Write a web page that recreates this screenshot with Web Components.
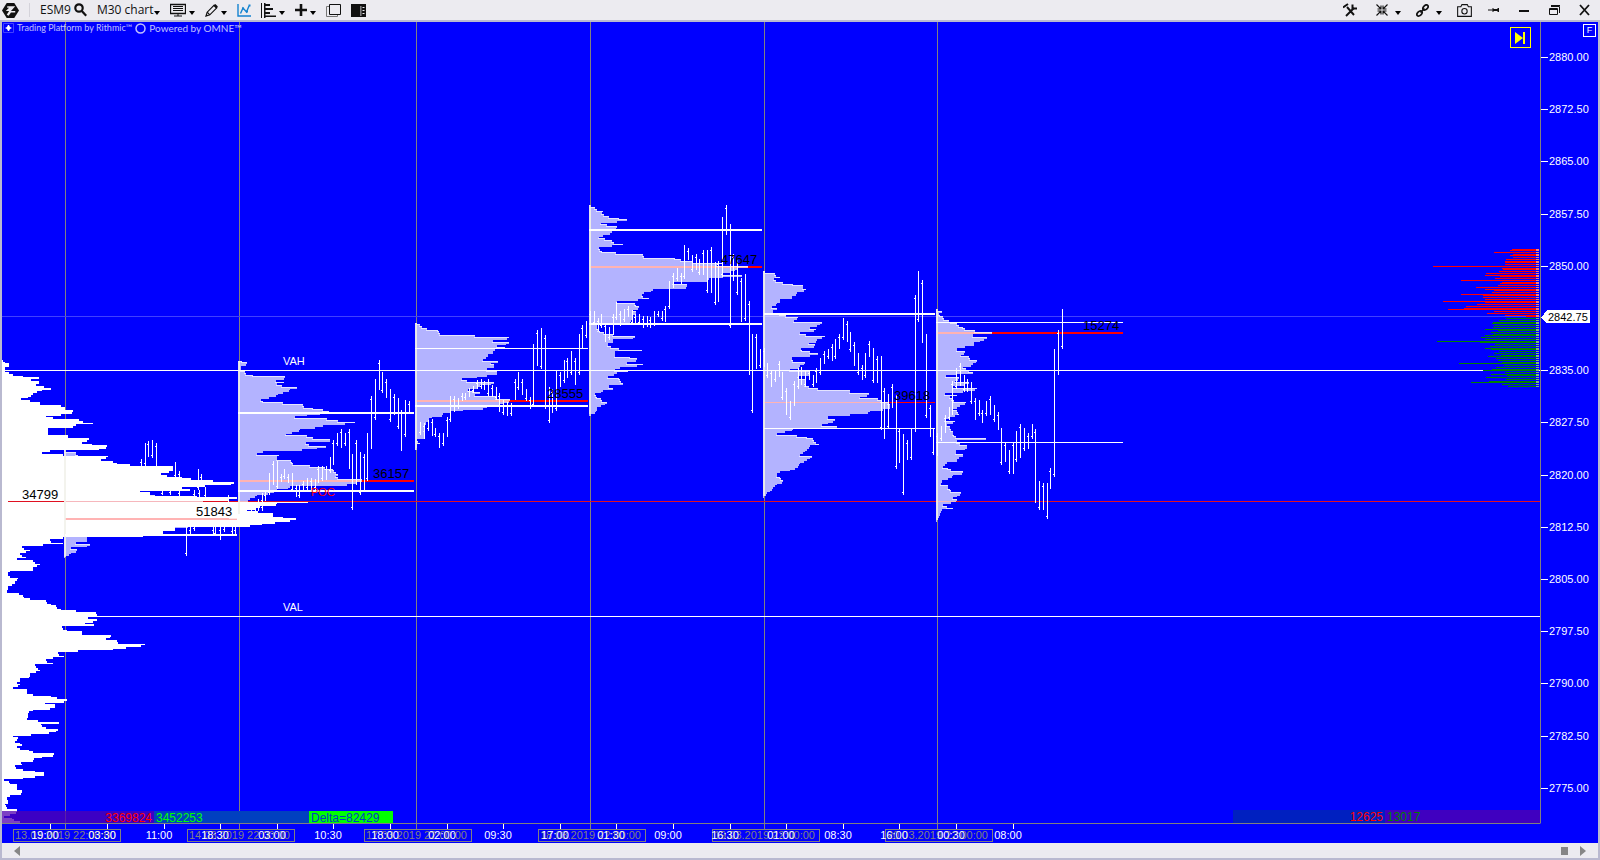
<!DOCTYPE html>
<html lang="en">
<head>
<meta charset="utf-8">
<title>ESM9 M30 chart</title>
<style>
    html, body {
        height: 100%;
        margin: 0;
    }
    body {
        font-family: "Liberation Sans", Arial, sans-serif;
        font-size: 11px;
        background: #ecebf0;
        overflow: hidden;
    }
</style>
</head>
<body>
<chart-window>
    <chart-toolbar slot="toolbar"></chart-toolbar>
    <chart-plot slot="plot"></chart-plot>
    <price-axis slot="prices" last="2842.75"></price-axis>
    <time-axis slot="times"></time-axis>
    <chart-scroller slot="scroller"></chart-scroller>
</chart-window>

<script>
// profile and bar data is stored in thirds of a pixel, relative to an origin
const UNIT = 3;
const TICK = 1.74;
const SESSIONS = [65, 239, 416, 590, 764, 937];

function pairs(text, size = 2) {
    const n = text.trim().split(/[\s,]+/).map(Number);
    const out = [];
    for (let i = 0; i < n.length; i += size) out.push(n.slice(i, i + size));
    return out;
}

class ChartWindow extends HTMLElement {
    constructor() {
        super();
        this.attachShadow({ mode: 'open' });
        this.shadowRoot.innerHTML = `
            <style>
                :host {
                    display: flex;
                    flex-direction: column;
                    height: 100vh;
                }
                .body {
                    flex: 1;
                    min-height: 0;
                    display: grid;
                    grid-template-columns: minmax(0, 1fr) 58px;
                    grid-template-rows: minmax(0, 1fr) 19px 15px;
                    border: 2px solid #b9b9d0;
                    background: #0000ff;
                }
                ::slotted([slot="times"]), ::slotted([slot="scroller"]) { grid-column: 1 / 3; }
            </style>
            <slot name="toolbar"></slot>
            <div class="body">
                <slot name="plot"></slot>
                <slot name="prices"></slot>
                <slot name="times"></slot>
                <slot name="scroller"></slot>
            </div>
        `;
    }
}

class ToolButton extends HTMLElement {
    connectedCallback() {
        if (this.shadowRoot) return;
        this.attachShadow({ mode: 'open' });
        const caret = this.hasAttribute('caret')
            ? '<svg class="caret" width="6" height="4" viewBox="0 0 6 4"><path d="M0 0h6L3 4z"/></svg>' : '';
        this.shadowRoot.innerHTML = `
            <style>
                :host { display: block; }
                button {
                    display: flex;
                    align-items: center;
                    gap: 3px;
                    height: 20px;
                    padding: 0;
                    border: 0;
                    background: none;
                    color: #111;
                    font-family: "Open Sans", "Noto Sans", sans-serif;
                    font-size: 12px;
                    line-height: 20px;
                    white-space: nowrap;
                }
                :host([tight]) button { gap: 0; }
                :host([wide]) button { gap: 7px; }
                .caret { margin-top: 5px; }
                ::slotted(svg) { display: block; }
            </style>
            <button type="button" aria-label="${this.getAttribute('label')}"><slot></slot>${caret}</button>
        `;
    }
}

class ChartToolbar extends HTMLElement {
    constructor() {
        super();
        this.attachShadow({ mode: 'open' });
        this.shadowRoot.innerHTML = `
            <style>
                :host {
                    display: flex;
                    justify-content: space-between;
                    height: 20px;
                    padding: 0 8px 0 2px;
                    background: #ecebf0;
                }
                .group { display: flex; gap: 10px; }
                .group.right { gap: 15px; }
                .sep { width: 1px; margin: 3px 0; background: #d4d3da; }
                svg { fill: none; stroke: #111; stroke-width: 1.4; }
                svg.solid { fill: #111; stroke: none; }
            </style>
            <div class="group">
                <tool-button label="Main menu">
                    <svg width="17" height="17" viewBox="0 0 18 18" class="solid">
                        <path d="M5 1h8l5 8-5 8H5L0 9z"/>
                        <path fill="#ecebf0" d="M5.500 4.500h8.500l-4.500 5H14V11H9.500L7 14.500l-2-1L7.500 9.500H4l3.500-3.500H5.500z"/>
                    </svg>
                </tool-button>
                <div class="sep"></div>
                <tool-button label="ESM9, find instrument">ESM9
                    <svg width="13" height="14" viewBox="0 0 13 14" style="stroke-width:2.200">
                        <circle cx="5" cy="5" r="3.700"/><path d="M7.800 8l4.400 4.800"/>
                    </svg>
                </tool-button>
                <tool-button label="M30 chart" caret tight>M30 chart</tool-button>
                <tool-button label="Screen" caret>
                    <svg width="16" height="14" viewBox="0 0 16 14" style="stroke-width:1">
                        <path d="M.500 1.500h15v9H.500z" stroke-width="1.300"/><path d="M3 3.500h10M3 5.500h10M3 7.500h10M8 10v3M4 13h8"/>
                    </svg>
                </tool-button>
                <tool-button label="Draw" caret>
                    <svg width="13" height="14" viewBox="0 0 13 14" style="stroke-width:1.200">
                        <path d="M1 13l1.200-3.800 7-7 2.600 2.600-7 7z"/><path d="M9.500 2l2.500 2.500" stroke-width="2.500"/><path d="M2.200 9.200l2.600 2.600"/>
                    </svg>
                </tool-button>
                <tool-button label="Indicators">
                    <svg width="14" height="14" viewBox="0 0 14 14" style="stroke:#1583cf">
                        <path d="M1 1v12h13M3.500 10.500L6 5l3.500 4L12 3"/><path d="M5 5.500h2M9 8.500h2M11.500 2.500h2" stroke-width="2"/>
                    </svg>
                </tool-button>
                <tool-button label="Clusters" caret>
                    <svg width="15" height="15" viewBox="0 0 15 15" class="solid">
                        <path d="M0 0h1v15H0zM3 0h1.500v15H3zM4 1h5v2H4zM4 5h8v2H4zM4 9h5v2H4zM4 12.500h11V14H4z"/>
                    </svg>
                </tool-button>
                <tool-button label="Add" caret>
                    <svg width="12" height="12" viewBox="0 0 12 12" class="solid"><path d="M4.700 0h2.600v4.700H12v2.600H7.300V12H4.700V7.300H0V4.700h4.700z"/></svg>
                </tool-button>
                <tool-button label="Windows">
                    <svg width="15" height="13" viewBox="0 0 15 13" style="stroke-width:1">
                        <path d="M3.500.500h11v10h-11z"/><path d="M3 2.500H.500v10h11V11" stroke="#777"/>
                    </svg>
                </tool-button>
                <tool-button label="Side panel">
                    <svg width="15" height="13" viewBox="0 0 15 13" class="solid">
                        <path d="M0 0h15v13H0z"/><path fill="#ecebf0" d="M9.500 2v10h.800V2zM11.500 3h2v1h-2zM11.500 6h2v1h-2zM11.500 9h2v1h-2z"/>
                    </svg>
                </tool-button>
            </div>
            <div class="group right">
                <tool-button label="Settings">
                    <svg width="18" height="14" viewBox="0 0 18 14">
                        <path d="M4 4l7 8M11 5l-8 8" stroke-width="1.900"/><path d="M0 4.500l5-3.500M9.500 1.500v4h4.500" stroke-width="2"/>
                    </svg>
                </tool-button>
                <tool-button label="Scale" caret wide>
                    <svg width="12" height="12" viewBox="0 0 12 12" style="stroke-width:1.100">
                        <path d="M.500.500L5 5M11.500.500L7 5M.500 11.500L5 7M11.500 11.500L7 7M5 1.500V5H1.500M7 1.500V5h3.500M5 10.500V7H1.500M7 10.500V7h3.500"/>
                    </svg>
                </tool-button>
                <tool-button label="Link" caret wide>
                    <svg width="13" height="13" viewBox="0 0 13 13" style="stroke-width:1.700">
                        <ellipse cx="9.500" cy="3.500" rx="3" ry="2" transform="rotate(-45 9.500 3.500)"/>
                        <ellipse cx="3.500" cy="9.500" rx="3" ry="2" transform="rotate(-45 3.500 9.500)"/>
                        <path d="M4.500 8.500l4-4"/>
                    </svg>
                </tool-button>
                <tool-button label="Snapshot">
                    <svg width="15" height="13" viewBox="0 0 14 12" style="stroke-width:1">
                        <path d="M.600 2.500h3l1-2h5l1 2h2.800v9H.600z"/><circle cx="7" cy="6.700" r="2.500"/>
                    </svg>
                </tool-button>
                <tool-button label="Pin">
                    <svg width="15" height="8" viewBox="0 0 15 8" class="solid">
                        <path d="M1 3.500h4.500v1H1zM5.500 2h1v4h-1zM6.500 3h4V2h1.500v4h-1.500V5h-4z"/>
                    </svg>
                </tool-button>
                <tool-button label="Minimize">
                    <svg width="15" height="12" viewBox="0 0 15 12" class="solid"><path d="M2 6h10v2H2z"/></svg>
                </tool-button>
                <tool-button label="Restore">
                    <svg width="15" height="10" viewBox="0 0 15 10" style="stroke-width:1">
                        <path d="M2.500 3.500h8v6h-8zM4 1.500h8.500V8M4 .500h9M2.500 4.500h8"/>
                    </svg>
                </tool-button>
                <tool-button label="Close">
                    <svg width="15" height="12" viewBox="0 0 15 12" style="stroke-width:1.800"><path d="M3 1l9 10M12 1L3 11"/></svg>
                </tool-button>
            </div>
        `;
    }
}

// volume profiles: left edge, top, colour, outline points (x,y)
const CONTRACT = [
    { base: 6, x: 0, y: 350, points: `8,30 15,36 26,42 26,50 15,56 15,64 28,70 40,74 70,80 117,84 117,90 93,92 116,96 116,102 108,105
        132,110 153,116 126,122 110,128 98,132 85,140 78,146 62,150 90,155 120,160 120,166 182,168 196,176 218,184 210,192
        183,197 138,200 160,206 236,210 278,218 228,226 200,234 144,238 144,250 204,258 204,264 266,268 246,276 276,282
        320,290 296,298 280,302 150,305 125,310 190,313 323,320 304,328 340,334 350,342 390,346 520,353 520,360 508,366
        484,372 538,380 545,384 572,390 640,395 702,400 616,406 545,412 570,418 420,424 450,428 450,434 590,442 710,444
        685,450 925,457 830,463 780,470 742,480 820,490 820,496 850,502 888,508 825,516 785,524 750,530 525,536 525,542
        488,546 490,552 710,556 430,560 190,565 150,572 190,580 130,588 65,592 90,600 78,608 60,612 78,620 52,628
        100,634 120,642 98,652 98,660 60,662 30,664 24,672 30,680 54,684 50,690 44,698 36,706 24,712 22,724` },
    { base: 6, x: 0, y: 590, points: `22,4 58,10 68,18 90,28 138,34 154,44 168,50 184,60 228,62 288,68 294,78 264,84 290,90 255,100
        282,106 186,112 200,120 246,126 246,134 333,138 318,148 350,155 435,164 378,172 340,178 276,182 234,186 174,190
        192,198 160,206 138,212 158,222 106,228 120,240 90,250 88,262 60,270 52,278 60,284 38,292 80,300 80,310 154,318
        172,324 200,332 136,340 165,348 150,355 100,360 86,366 82,388 114,394 176,400 124,404 138,412 174,420 148,428
        94,434 40,438 54,446 46,454 60,460 78,470 52,472 86,480 98,488 162,494 126,502 102,510 64,516 66,528 46,530
        68,538 104,544 132,552 104,560 70,564 36,568 12,572 28,578 50,584 52,594 66,600 62,612 30,618 22,622 24,636
        16,644 22,652 50,660 50,666 12,678 36,686 60,695` }
];

const PROFILES = [
    { base: 193, x: 0, y: 350, points: `196,300 228,306 228,314 300,330 350,350 400,370 470,400 500,412 400,424 440,434 580,444 650,462
        690,480 690,500 711,507 600,525 480,540 430,556 262,562 262,572 228,577 296,582 270,586 214,594 230,602 212,608 208,615 194,622` },
    { base: 25, x: 230, y: 310, points: `28,152 36,156 50,160 48,165 34,168 33,182 46,188 70,194 125,202 164,204 163,208 138,212 162,216
        162,221 142,225 155,229 200,234 212,236 180,240 160,246 145,254 138,260 108,262 116,266 92,271 100,275 160,278
        168,284 220,287 250,294 280,301 296,304 270,312 232,318 194,322 290,328 325,334 374,339 345,344 278,349 255,354
        210,360 185,368 168,376 230,380 248,385 335,388 300,392 228,398 236,407 288,408 260,415 215,420 150,424 100,428
        80,433 146,436 140,444 184,450 188,460 240,466 285,474 310,480 324,492 318,500 342,508 396,512 380,520 350,524
        260,528 180,532 140,540 115,552 80,557 60,566 46,575 36,590 50,600 28,610` },
    { base: 556, x: 230, y: 310, points: `560,38 570,44 590,56 625,63 630,74 735,77 836,84 790,92 838,99 800,106 825,112 795,120 790,126
        775,136 760,148 805,154 782,163 792,168 770,176 772,184 802,189 770,196 740,204 695,208 710,215 793,219 750,226
        740,232 715,238 750,247 735,256 800,262 770,268 840,272 820,280 810,286 772,290 740,300 700,304 660,308 640,314
        605,320 598,330 588,340 582,350 586,370 582,385 562,392 570,402 562,408 558,418` },
    { base: 28, x: 580, y: 190, points: `30,46 44,54 68,64 66,70 86,78 116,86 140,92 110,98 62,102 80,107 110,112 96,124 90,132 70,138
        58,142 76,148 95,154 128,163 95,170 58,176 66,183 108,190 188,194 192,202 285,205 340,214 430,222 410,226 505,231
        470,238 430,250 485,258 430,264 388,270 345,276 280,280 320,286 318,296 220,300 192,308 186,316 206,324 175,330
        110,338 165,342 176,352 160,362 168,368 160,380 150,396 60,402 50,410 55,420 72,428 100,436 164,442 100,452
        84,462 92,472 185,480 104,488 106,496 150,502 170,510 140,518 190,524 120,532 105,538 145,542 110,548 84,560
        118,567 130,580 86,588 98,597 68,602 46,612 52,622 62,628 80,638 64,648 50,656 48,666 32,674` },
    { base: 550, x: 580, y: 190, points: `554,244 586,252 600,262 582,268 610,276 638,284 668,290 677,300 650,310 636,322 600,332 590,342
        576,350 590,357 578,364 600,372 655,380 642,392 725,398 710,406 690,412 708,420 660,430 736,438 710,448 708,456
        688,460 705,468 662,478 714,490 690,496 636,502 640,512 674,520 660,530 630,538 690,544 688,556 655,562 675,570
        676,584 714,598 810,604 868,612 840,622 894,628 925,636 930,642 930,652 858,658 910,660 870,666 810,676 744,682
        740,688 764,691 726,704 770,711 640,718 590,730 650,738 680,740 700,748 716,764 690,770 674,782 660,797 695,800
        660,820 655,830 630,840 600,846 590,854 600,860 610,874 590,882 578,894 562,908 552,920` },
    { base: 109, x: 900, y: 260, points: `112,148 126,156 118,162 130,172 146,182 172,190 190,204 225,212 275,220 218,226 260,234 240,242
        186,248 222,252 195,262 170,268 152,274 194,276 184,288 206,292 230,304 218,314 190,322 218,336 170,346 138,351
        176,356 165,365 206,370 160,378 230,387 190,394 134,400 170,406 150,410 162,420 198,429 180,436 158,446 172,452
        176,462 150,472 135,480 164,486 142,494 150,502 160,518 168,532 258,538 170,544 180,552 200,560 196,568 168,576
        190,585 176,594 172,602 140,610 128,618 145,626 188,638 160,646 145,656 125,664 122,674 145,680 150,690 182,700
        160,712 170,722 130,734 158,744 125,750 112,780` }
];

// price bars: x, high, low
const BARS = [
    { x: 0, y: 350, bars: `424,328,350 436,280,350 445,274,322 457,270,325 469,280,350 526,336,385 538,363,400 595,357,420 604,372,412
        583,420,440 598,420,440 616,410,442 486,420,436 511,420,436 538,420,440 559,530,618 571,530,558 583,530,542
        640,530,552 646,530,558 661,530,570 673,530,545 685,435,455 697,530,552 706,530,550 754,462,485 766,455,485
        775,452,480 787,440,482` },
    { x: 230, y: 310, bars: `85,568,605 97,550,600 106,545,572 118,490,555 130,453,526 142,453,536 154,492,516 163,476,506 175,492,520
        187,490,548 199,525,562 208,525,563 220,514,544 232,504,540 244,505,545 256,506,540 265,468,520 277,468,512
        289,468,510 301,442,490 310,390,465 322,370,408 334,357,415 346,370,410 358,357,476 367,432,600 379,390,525
        391,425,555 403,432,540 412,369,512 424,258,417 436,207,330 448,150,240 457,186,250 469,207,265 481,237,335
        493,252,315 505,264,356 514,300,423 526,270,380 538,273,312 572,335,375 583,338,385 595,330,364 607,327,378
        616,354,380 628,370,414 640,370,408 652,320,380 661,258,336 673,258,305 685,265,298 697,249,272 706,249,270
        718,235,262 730,228,250 742,210,236 754,207,236 763,213,240 775,207,258 787,225,260 799,230,270 808,250,308
        820,270,315 832,275,317 844,280,318 856,207,270 865,186,240 877,207,255 889,237,272 901,260,297 910,102,292
        922,60,168 934,54,178 946,75,298 958,230,338 967,236,308 979,183,304 991,186,230 1003,150,220 1012,144,205
        1024,123,195 1036,145,225 1048,72,195` },
    { x: 580, y: 190, bars: `7,405,475 19,393,445 31,362,400 43,363,405 55,385,424 64,372,415 76,400,456 88,410,450 100,372,435 109,336,390
        121,363,408 133,357,395 145,348,382 157,360,405 166,372,400 178,372,405 190,378,414 202,378,410 211,380,414
        223,362,408 235,363,382 247,363,393 256,348,396 268,273,358 280,249,294 292,234,274 304,248,282 313,165,267
        325,174,210 337,196,246 349,192,240 358,207,255 370,180,255 382,180,309 394,171,309 406,216,345 415,213,337
        427,81,262 439,45,135 451,102,414 460,192,273 472,207,316 484,263,396 496,252,394 508,333,555 517,432,669
        529,432,537 541,477,534 553,474,532 562,520,564 574,540,590 586,540,576 598,513,560 607,546,630 619,594,675
        631,633,690 643,573,648 655,534,598 664,532,586 676,540,590 688,540,570 700,555,590 709,534,580 721,504,555
        733,483,522 745,477,508 757,462,514 766,447,508 778,432,478 790,384,450 802,393,456 811,426,486 823,456,528
        835,489,555 847,525,570 856,489,564 868,453,502 880,474,579 892,498,579 904,498,720 913,594,747 925,612,716
        937,582,655 949,615,837 958,715,819 970,732,915 982,750,810 994,717,810 1006,315,726 1015,243,396 1027,270,459
        1039,432,684 1051,645,742 1060,715,795` },
    { x: 900, y: 260, bars: `112,520,588 124,497,543 136,465,520 148,441,480 157,363,466 169,324,388 181,309,378 193,345,396 202,357,396
        214,366,432 226,414,480 238,420,468 247,450,489 259,423,468 271,408,465 283,435,486 295,456,510 304,505,615
        316,547,608 328,570,642 340,547,642 349,513,606 361,492,594 373,504,573 385,518,567 397,492,538 406,507,729
        418,663,750 430,669,750 442,669,777 451,624,687 463,267,650 475,210,345 487,147,267` }
];

// session levels: x1, x2, y, thickness
const VALUE_LINES = pairs(`65,237,534,2 238,414,412,2 238,414,490,2 415,588,348,1 415,588,405,2 589,762,229,2 589,762,323,2
    764,935,313,2 764,935,428,1 936,1123,322,1 936,1123,442,1`, 4);
const POC_LINES = pairs('65,237,518,2 238,414,480,2 415,588,400,2 590,762,266,2 764,935,402,1 937,1123,332,2', 4);

// order book: y, left edge
const ASKS = `57,336 61,330 67,282 73,338 76,330 82,340 88,318 94,315 97,315 103,315 109,99 115,305 118,310 124,297 130,258 136,255
    139,300 145,285 151,183 157,305 160,300 166,294 172,228 178,255 181,282 187,276 193,183 196,250 202,250 208,255 214,129
    217,255 223,231 229,198 235,192 238,144 244,282 250,261 256,315 259,378`;
const BIDS = `265,318 271,297 277,280 280,276 286,282 292,279 298,255 301,294 307,274 313,279 316,255 322,243 328,255 334,111 337,240
    343,285 349,270 355,255 358,274 364,297 370,282 376,303 379,264 385,288 391,294 397,306 400,177 406,312 412,288 418,276
    421,249 427,315 433,273 436,322 442,258 448,318 454,267 457,213 463,306 469,324`;

// one bar per price tick; edge holds the bright top of each bar that juts out
function profilePaths(profile) {
    const pts = pairs(profile.points).map(([x, y]) => [profile.x + x / UNIT, profile.y + y / UNIT]);
    const base = Math.round(profile.x + profile.base / UNIT);
    const end = pts[pts.length - 1][1];
    let fill = '', edge = '', prev = base;
    for (let y = pts[0][1]; y < end; y += TICK) {
        const top = Math.round(y), bottom = Math.round(y + TICK);
        const inside = pts.filter(p => p[1] >= y && p[1] < y + TICK);
        let x;
        if (inside.length) {
            x = inside[inside.length - 1][0];
        } else {
            const i = pts.findIndex(p => p[1] > y);
            const a = pts[i - 1], b = pts[i];
            x = a[0] + (b[0] - a[0]) * (y - a[1]) / (b[1] - a[1]);
        }
        x = Math.round(x);
        fill += `M${base} ${top}H${x}V${bottom}H${base}z`;
        if (x > prev) edge += `M${Math.max(base, prev - 1)} ${top}H${x}v1H${Math.max(base, prev - 1)}z`;
        prev = x;
    }
    return { fill, edge, base, top: Math.round(pts[0][1]), height: Math.round(end - pts[0][1]) };
}

class ChartPlot extends HTMLElement {
    constructor() {
        super();
        this.attachShadow({ mode: 'open' });
        this.shadowRoot.innerHTML = `
            <style>
                :host {
                    display: block;
                    position: relative;
                    overflow: hidden;
                    min-width: 0;
                    border-bottom: 1px solid #808080;
                }
                svg { display: block; shape-rendering: crispEdges; }
                .plot, .book { position: absolute; top: 0; height: 100%; }
                .plot { left: 0; width: 100%; }
                .book { right: 0; width: 140px; }
                .volume { font-size: 13px; }
                .brand {
                    position: absolute;
                    top: 0;
                    left: 1px;
                    display: flex;
                    align-items: center;
                    gap: 3px;
                    height: 12px;
                    color: #c0c0ff;
                    font-family: Lato, sans-serif;
                    font-size: 10px;
                    line-height: 12px;
                    white-space: nowrap;
                }
                .brand .platform { font-size: 9px; }
                .brand svg, .end svg { shape-rendering: auto; }
                .end {
                    position: absolute;
                    top: 5px;
                    right: 9px;
                    display: grid;
                    place-items: center;
                    width: 21px;
                    height: 21px;
                    padding: 0;
                    border: 1px solid #ffff00;
                    background: none;
                }
                .totals {
                    position: absolute;
                    bottom: 0;
                    display: flex;
                    height: 12px;
                    font-size: 12px;
                    line-height: 15px;
                }
                .totals.all { left: 0; }
                .totals.book-sum { right: 0; height: 13px; }
                .totals span { box-sizing: border-box; padding: 0 2px; }
                .asks { width: 152px; color: #ff0000; text-align: right; background: rgba(80, 0, 176, .75); }
                .bids { width: 155px; color: #00ff00; background: #0040c0; }
                .delta { width: 84px; color: #0040c0; background: #00ff00; }
                .book-sum .asks { background: #0020c0; }
                .book-sum .bids { color: #008000; background: #4000c0; }
            </style>
            <svg class="plot"><g transform="translate(-2 -22)">${this._drawPlot()}</g></svg>
            <svg class="book"><g transform="translate(-1400 -22)">${this._drawBook()}</g></svg>
            <div class="brand">
                <svg width="11" height="10" viewBox="0 0 11 10"><path d="M.500.500h10v9H.500z" fill="none" stroke="#4040ff"/><path d="M5 2h1l1 2 2 1-2 1-1 2H5L4 6 2 5l2-1z" fill="#fff"/></svg>
                <span class="platform">Trading Platform by Rithmic™</span>
                <svg width="11" height="11" viewBox="0 0 11 11"><circle cx="5.500" cy="5.500" r="4.500" fill="none" stroke="#c0c0ff" stroke-width="1.500"/></svg>
                <span>Powered by OMNE™</span>
            </div>
            <button class="end" type="button" aria-label="Go to last bar">
                <svg width="11" height="12" viewBox="0 0 11 12" fill="#ffff00"><path d="M0 0l8 6-8 6zM8 0h2v12H8z"/></svg>
            </button>
            <div class="totals all"><span class="asks">3369824</span><span class="bids">3452253</span><span class="delta">Delta=82429</span></div>
            <div class="totals book-sum"><span class="asks">12625</span><span class="bids">13017</span></div>
        `;
    }

    _drawPlot() {
        const rect = (x, y, w, h, fill) => `<rect x="${x}" y="${y}" width="${w}" height="${h}" fill="${fill}"/>`;
        let out = SESSIONS.map(x => rect(x, 0, 1, 3000, '#808080')).join('');
        out += CONTRACT.map(p => `<path fill="#fff" d="${profilePaths(p).fill}"/>`).join('');
        out += rect(0, 616, 6000, 1, '#fff');
        out += rect(0, 316, 6000, 1, '#4040ff');
        out += rect(8, 501, 6000, 1, '#e01020');
        out += POC_LINES.map(l => rect(l[0], l[2], l[1] - l[0], l[3], '#ff0000')).join('');
        for (const p of PROFILES.map(profilePaths)) {
            out += `<path fill="#fff" fill-opacity=".7" d="${p.fill}"/><path fill="#fff" fill-opacity=".65" d="${p.edge}"/>`;
            out += `<rect x="${p.base}" y="${p.top}" width="2" height="${p.height}" fill="#f0f0e8" fill-opacity=".8"/>`;
        }
        out += rect(0, 370, 6000, 1, '#fff');
        out += VALUE_LINES.map(l => rect(l[0], l[2], l[1] - l[0], l[3], '#fff')).join('');
        let bars = '';
        for (const group of BARS) {
            pairs(group.bars, 3).forEach(([x, high, low], i) => {
                const px = Math.floor(group.x + x / UNIT);
                const top = Math.round(group.y + high / UNIT);
                const height = Math.round((low - high) / UNIT);
                const open = i % 2 ? top + height - 3 : top + 3;
                bars += `M${px} ${top}h1v${height}h-1zM${px - 1} ${open}h1v1h-1z`;
            });
        }
        out += `<path fill="#fff" d="${bars}"/>`;
        const volumes = [[22, 499, '34799'], [196, 516, '51843'], [373, 478, '36157'], [547, 398, '28555'],
            [721, 264, '47647'], [894, 400, '39618'], [1083, 330, '15274']];
        out += volumes.map(([x, y, v]) => `<text class="volume" x="${x}" y="${y}">${v}</text>`).join('');
        out += '<text x="283" y="365" fill="#fff">VAH</text><text x="283" y="611" fill="#fff">VAL</text>';
        out += '<text x="311" y="496" fill="#ff0000">POC</text>';
        return out;
    }

    _drawBook() {
        const side = (data, fill) => pairs(data).map(([y, x]) => {
            const left = Math.round(1400 + x / UNIT), top = Math.floor(230 + y / UNIT);
            return `<rect x="${left}" y="${top}" width="${1539 - left}" height="1" fill="${fill}"/>`
                + `<rect x="1536" y="${top}" width="3" height="1" fill="#fff" fill-opacity=".5"/>`;
        }).join('');
        return side(ASKS, '#ff0000') + side(BIDS, '#008000');
    }
}

class PriceAxis extends HTMLElement {
    connectedCallback() {
        if (this.shadowRoot) return;
        this.attachShadow({ mode: 'open' });
        let labels = '';
        for (let i = 0; i < 15; i++) {
            if (i === 5) continue; // covered by the last price
            const y = Math.round(35 + i * 52.2);
            labels += `<path d="M0 ${y}h7v1H0z"/><text x="8" y="${y + 4}">${(2880 - i * 7.5).toFixed(2)}</text>`;
        }
        this.shadowRoot.innerHTML = `
            <style>
                :host {
                    display: block;
                    position: relative;
                    overflow: hidden;
                    border-left: 1px solid #808080;
                    border-bottom: 1px solid #0000ff;
                }
                svg { position: absolute; width: 100%; height: 100%; fill: #fff; shape-rendering: crispEdges; }
                button {
                    position: absolute;
                    top: 2px;
                    right: 2px;
                    width: 13px;
                    height: 13px;
                    padding: 0;
                    border: 1px solid #fff;
                    background: none;
                    color: #fff;
                    font: 9px/11px "Liberation Sans", sans-serif;
                    text-align: center;
                }
            </style>
            <svg>
                ${labels}
                <path d="M0 296l6-8h43v13H6z"/>
                <text x="7" y="299" fill="#000">${this.getAttribute('last')}</text>
            </svg>
            <button type="button" aria-label="Fixed scale">F</button>
        `;
    }
}

class TimeAxis extends HTMLElement {
    constructor() {
        super();
        this.attachShadow({ mode: 'open' });
        const times = [[50, '19:00'], [107, '03:30'], [164, '11:00'], [220, '18:30'], [277, '03:00'], [333, '10:30'],
            [390, '18:00'], [447, '02:00'], [503, '09:30'], [560, '17:00'], [616, '01:30'], [673, '09:00'],
            [730, '16:30'], [786, '01:00'], [843, '08:30'], [899, '16:00'], [956, '00:30'], [1013, '08:00']];
        const dates = [[13, '13'], [187, '14'], [364, '17'], [538, '18'], [712, '19'], [885, '20']];
        const boxes = dates.map(([x, day]) =>
            `<rect x="${x}.5" y="5.5" width="107" height="12" fill="none" stroke="#808080"/>`
            + `<text x="${x + 2}" y="15" fill="#808080">${day}.03.2019 22:00:00</text>`).join('');
        const labels = times.map(([x, t]) =>
            `<path d="M${x} 0h1v5h-1z" fill="#fff"/><text x="${x - 5}" y="15" text-anchor="middle" fill="#fff">${t}</text>`).join('');
        const sessions = SESSIONS.map(x => `<path d="M${x} 0h1v5h-1z" fill="#808080"/>`).join('');
        this.shadowRoot.innerHTML = `
            <style>
                :host { display: block; min-width: 0; }
                svg { display: block; width: 100%; height: 100%; shape-rendering: crispEdges; }
            </style>
            <svg><g transform="translate(-2 0)">${sessions}${boxes}${labels}</g></svg>
        `;
    }
}

class ChartScroller extends HTMLElement {
    constructor() {
        super();
        this.attachShadow({ mode: 'open' });
        this.shadowRoot.innerHTML = `
            <style>
                :host {
                    display: flex;
                    align-items: center;
                    gap: 12px;
                    padding: 0 12px;
                    background: #ecebf0;
                }
                button { display: block; padding: 0; border: 0; background: none; }
                .thumb { width: 7px; height: 8px; margin-left: auto; background: #868686; }
                svg { display: block; fill: #868686; }
            </style>
            <button type="button" aria-label="Scroll left"><svg width="6" height="10"><path d="M6 0v10L0 5z"/></svg></button>
            <button type="button" class="thumb" aria-label="Scroll position"></button>
            <button type="button" aria-label="Scroll right"><svg width="6" height="10"><path d="M0 0v10l6-5z"/></svg></button>
        `;
    }
}

customElements.define('tool-button', ToolButton);
customElements.define('chart-toolbar', ChartToolbar);
customElements.define('chart-plot', ChartPlot);
customElements.define('price-axis', PriceAxis);
customElements.define('time-axis', TimeAxis);
customElements.define('chart-scroller', ChartScroller);
customElements.define('chart-window', ChartWindow);
</script>
</body>
</html>
